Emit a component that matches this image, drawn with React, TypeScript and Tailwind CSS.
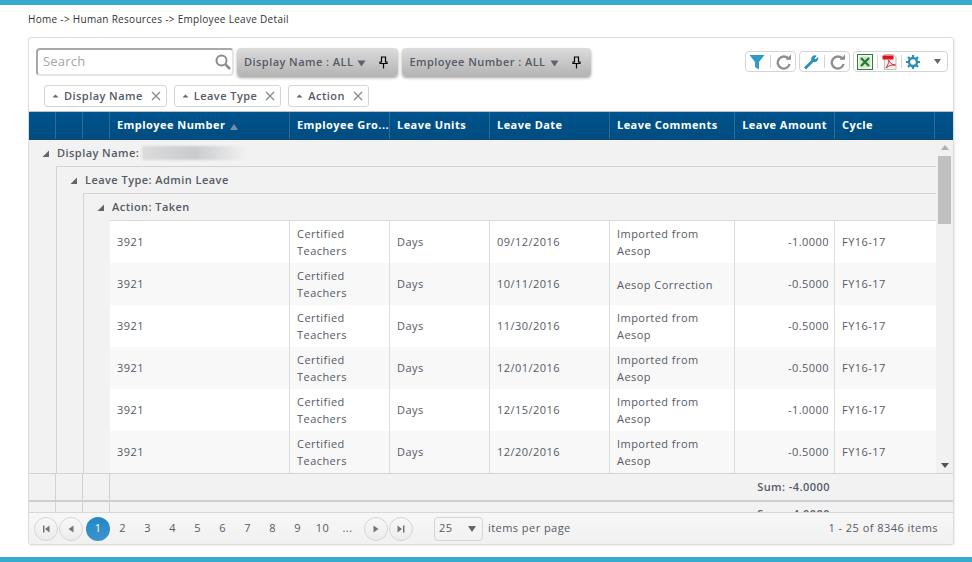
import { ChevronLeft } from "lucide-react"

const columns = [
  { label: "Employee Number", width: "w-[180px]", sort: true },
  { label: "Employee Gro...", width: "w-[100px]" },
  { label: "Leave Units", width: "w-[100px]" },
  { label: "Leave Date", width: "w-[120px]" },
  { label: "Leave Comments", width: "w-[125px]" },
  { label: "Leave Amount", width: "w-[100px]", right: true },
  { label: "Cycle", width: "w-[100px]" },
]

const rows = [
  { date: "09/12/2016", comment: "Imported from Aesop", amount: "-1.0000" },
  { date: "10/11/2016", comment: "Aesop Correction", amount: "-0.5000" },
  { date: "11/30/2016", comment: "Imported from Aesop", amount: "-0.5000" },
  { date: "12/01/2016", comment: "Imported from Aesop", amount: "-0.5000" },
  { date: "12/15/2016", comment: "Imported from Aesop", amount: "-1.0000" },
  { date: "12/20/2016", comment: "Imported from Aesop", amount: "-0.5000" },
]

function Corner() {
  return (
    <svg width="7" height="7" viewBox="0 0 7 7" className="shrink-0">
      <path d="M7 0.5V7H0.5z" fill="#5f6670" />
    </svg>
  )
}

function Refresh() {
  return (
    <svg width="16" height="16" viewBox="0 0 16 16" fill="none">
      <path d="M12.6 5A6 6 0 1 0 13.6 10" stroke="#8f8f8f" strokeWidth="2.4" />
      <path d="M9.5 5.8H15V0.6z" fill="#8f8f8f" />
    </svg>
  )
}

function Tag({ label }: { label: string }) {
  return (
    <div className="flex h-[22px] items-center rounded-[3px] border border-[#d5d5d5] bg-white pl-[7px] pr-[4px] text-[#555a66]">
      <svg width="7" height="4" viewBox="0 0 7 4"><path d="M3.5 0.5L6.5 3.5H0.5z" fill="#666" /></svg>
      <span className="ml-[5px] font-semibold">{label}</span>
      <svg width="12" height="12" viewBox="0 0 12 12" className="ml-[7px]">
        <path d="M2 2l8 8M10 2l-8 8" stroke="#8c8c8c" strokeWidth="1.4" />
      </svg>
    </div>
  )
}

function FilterButton({ label }: { label: string }) {
  return (
    <div className="flex h-[28px] items-center rounded-[4px] bg-gradient-to-b from-[#dcdcdc] to-[#b4b4b4] pl-[7px] pr-[10px] font-semibold text-[#555a66] shadow-[0_2px_3px_rgba(0,0,0,0.35)]">
      <span>{label}</span>
      <svg width="9" height="7" viewBox="0 0 9 7" className="ml-[4px] mt-[2px]"><path d="M0.5 0.5h8L4.5 6.5z" fill="#5a6270" /></svg>
      <svg width="9" height="13" viewBox="0 0 9 13" className="ml-[13px]">
        <path d="M2.5 1h4v5h1.5v1.5H1V6h1.5z" fill="none" stroke="#000" strokeWidth="1.2" />
        <path d="M4.5 7.5V12.5" stroke="#000" strokeWidth="1.2" />
      </svg>
    </div>
  )
}

function Group({ label, blurred, top }: { label: string; blurred?: boolean; top?: boolean }) {
  return (
    <div className={`flex h-[27px] items-center font-semibold text-[#555a66] ${top ? "" : "border-t border-[#d2d2d2]"}`}>
      <div className="ml-[12px] mr-[8px] flex w-[8px] justify-center"><Corner /></div>
      <span>{label}</span>
      {blurred && <div className="ml-[3px] h-[14px] w-[105px] bg-gradient-to-r from-[#dcdcdc] via-[#c9cbce] to-[#f2f2f2] blur-[1px]" />}
    </div>
  )
}

function SpacerCells({ count }: { count: number }) {
  return (
    <>
      {Array.from({ length: count }).map((_, i) => (
        <div key={i} className="w-[27px] shrink-0 border-r border-[#d2d2d2]" />
      ))}
    </>
  )
}

function RoundBtn({ d }: { d: string }) {
  return (
    <div className="flex h-[24px] w-[24px] items-center justify-center rounded-full border border-[#d5d5d5] bg-gradient-to-b from-[#f8f8f8] to-[#ececec]">
      <svg width="10" height="10" viewBox="0 0 10 10"><path d={d} fill="#6e7480" /></svg>
    </div>
  )
}

export default function App() {
  return (
    <div className="flex h-[562px] w-[972px] flex-col overflow-hidden border-y-[5px] border-[#36abce] bg-white font-['Open_Sans',sans-serif] text-[11px] tracking-[0.45px] text-[#555a66]">
      <div className="flex h-[27px] items-center pl-[28px] pt-[1px] text-[10px] tracking-[0.3px] text-[#333]">Home -&gt; Human Resources -&gt; Employee Leave Detail</div>

      <div className="ml-[28px] mt-[5px] flex h-[508px] w-[926px] flex-col overflow-hidden rounded-[3px] border border-[#dcdcdc] shadow-[1px_1px_2px_rgba(0,0,0,0.08)]">
        <div className="flex h-[73px] flex-col">
          <div className="flex items-start pl-[7px] pr-[5px] pt-[10px]">
            <div className="flex h-[28px] w-[198px] items-center rounded-[4px] border-2 border-[#a8a8a8] border-b-[#e4e4e4] border-r-[#e4e4e4] pl-[5px] pr-[1px] text-[13px] tracking-[0.2px] text-[#a5a5a5]">
              <span className="flex-1">Search</span>
              <svg width="16" height="16" viewBox="0 0 16 16" fill="none">
                <circle cx="6.5" cy="6.5" r="5" stroke="#8c8c8c" strokeWidth="2" />
                <path d="M10.5 10.5L15 15" stroke="#8c8c8c" strokeWidth="2.5" />
              </svg>
            </div>
            <div className="ml-[3px] flex gap-[4px]">
              <FilterButton label="Display Name : ALL" />
              <FilterButton label="Employee Number : ALL" />
            </div>
            <div className="ml-auto mt-[3px] flex items-center gap-[3px]">
              <div className="flex h-[21px] items-center gap-[5px] rounded-[4px] border border-[#d5d5d5] px-[3px]">
                <svg width="16" height="16" viewBox="0 0 16 16"><path d="M0.5 1h15L10 8v7.5L6 13V8z" fill="#2d9bc4" /></svg>
                <div className="h-[13px] w-px bg-[#d5d5d5]" />
                <Refresh />
              </div>
              <div className="flex h-[21px] items-center gap-[5px] rounded-[4px] border border-[#d5d5d5] px-[3px]">
                <svg width="16" height="16" viewBox="0 0 16 16" fill="none">
                  <path d="M2 14.5L10 6.5" stroke="#2d8fb8" strokeWidth="2.8" />
                  <path d="M9 7a3.6 3.6 0 0 1 4.8-5.2L11.5 4.2l1 1 2.6-2.2A3.8 3.8 0 0 1 10.6 8z" fill="#2d8fb8" />
                </svg>
                <div className="h-[13px] w-px bg-[#d5d5d5]" />
                <Refresh />
              </div>
              <div className="flex h-[21px] items-center gap-[3px] rounded-[4px] border border-[#d5d5d5] pl-[3px] pr-[3px]">
                <svg width="16" height="16" viewBox="0 0 16 16">
                  <rect x="0.5" y="0.5" width="15" height="15" fill="#f2f7ee" stroke="#2f7a3c" />
                  <rect x="2.5" y="2.5" width="11" height="11" fill="#cfe3c6" />
                  <path d="M4 4l8 8M12 4l-8 8" stroke="#1f7a37" strokeWidth="2.2" />
                </svg>
                <div className="mx-[1px] h-[13px] w-px bg-[#d5d5d5]" />
                <svg width="15" height="16" viewBox="0 0 15 16">
                  <path d="M2.5 0.5H11L14 3.5V15.5H2.5z" fill="#f3f3f3" stroke="#bdbdbd" />
                  <rect x="0.5" y="1.5" width="11" height="4" fill="#e0141e" />
                  <path d="M4 14C7 9 7 7 6.5 6C8 9 10 11 13.5 11C10 10.5 7 11.5 4 14z" fill="none" stroke="#d22" strokeWidth="1" />
                </svg>
                <div className="mx-[1px] h-[13px] w-px bg-[#d5d5d5]" />
                <svg width="14" height="14" viewBox="0 0 14 14" fill="none">
                  <circle cx="7" cy="7" r="4" stroke="#2d8fb8" strokeWidth="2.4" />
                  <path d="M7 0v3M7 11v3M0 7h3M11 7h3M2 2l2 2M10 10l2 2M12 2l-2 2M4 10l-2 2" stroke="#2d8fb8" strokeWidth="2.2" />
                </svg>
                <svg width="9" height="7" viewBox="0 0 9 7" className="ml-[10px] mr-[2px]"><path d="M1 1h7L4.5 6z" fill="#5f6670" /></svg>
              </div>
            </div>
          </div>
          <div className="ml-[15px] mt-[9px] flex gap-[7px]">
            <Tag label="Display Name" />
            <Tag label="Leave Type" />
            <Tag label="Action" />
          </div>
        </div>

        <div className="flex h-[29px] shrink-0 border-y border-[#b9c3cb] border-b-[#0d4a78] bg-gradient-to-b from-[#00538e] to-[#004d80] font-bold text-white">
          <SpacerColumns />
          {columns.map((c) => (
            <div key={c.label} className={`${c.width} flex shrink-0 items-center whitespace-nowrap border-r border-[#2b6c99] px-[7px] ${c.right ? "justify-end px-[4px]" : ""}`}>
              {c.label}
              {c.sort && <svg width="8" height="6" viewBox="0 0 8 6" className="ml-[5px] mt-[3px]"><path d="M4 0l4 6H0z" fill="#7d8da0" /></svg>}
            </div>
          ))}
        </div>

        <div className="flex min-h-0 flex-1 bg-[#f2f2f2]">
          <div className="flex min-w-0 flex-1 flex-col overflow-hidden">
            <Group label="Display Name:" blurred top />
            <div className="flex-1 pl-[27px]">
              <div className="border-l border-[#d2d2d2]">
                <Group label="Leave Type: Admin Leave" />
                <div className="pl-[26px]">
                  <div className="border-l border-[#d2d2d2]">
                    <Group label="Action: Taken" />
                    <div className="ml-[26px] border-t border-[#d8d8d8]">
                      {rows.map((r, i) => (
                        <div key={r.date} className={`flex h-[42px] ${i % 2 ? "bg-[#f8f8f8]" : "bg-white"}`}>
                          <div className="flex w-[180px] shrink-0 items-center border-r border-[#dcdcdc] px-[7px]">3921</div>
                          <div className="flex w-[100px] shrink-0 items-center border-r border-[#dcdcdc] px-[7px] leading-[17px]">Certified Teachers</div>
                          <div className="flex w-[100px] shrink-0 items-center border-r border-[#dcdcdc] px-[7px]">Days</div>
                          <div className="flex w-[120px] shrink-0 items-center border-r border-[#dcdcdc] px-[7px]">{r.date}</div>
                          <div className="flex w-[125px] shrink-0 items-center border-r border-[#dcdcdc] px-[7px] leading-[17px]">{r.comment}</div>
                          <div className="flex w-[100px] shrink-0 items-center justify-end border-r border-[#dcdcdc] px-[5px]">{r.amount}</div>
                          <div className="flex w-[100px] shrink-0 items-center px-[7px]">FY16-17</div>
                        </div>
                      ))}
                    </div>
                  </div>
                </div>
              </div>
            </div>
          </div>
          <div className="flex w-[17px] shrink-0 flex-col items-center justify-between bg-[#f1f1f1] py-[5px]">
            <div className="flex w-full flex-col items-center">
              <svg width="8" height="5" viewBox="0 0 8 5"><path d="M4 0l4 5H0z" fill="#b0b0b0" /></svg>
              <div className="mt-[6px] h-[68px] w-[13px] bg-[#c0c0c0]" />
            </div>
            <svg width="8" height="5" viewBox="0 0 8 5"><path d="M0 0h8L4 5z" fill="#555" /></svg>
          </div>
        </div>

        <div className="shrink-0 border-t border-[#d2d2d2] bg-[#f2f2f2]">
          <div className="flex h-[26px] pr-[17px]">
            <SpacerCells count={3} />
            <div className="flex flex-1 items-center justify-end pr-[106px] font-semibold">Sum: -4.0000</div>
          </div>
          <div className="flex h-[12px] overflow-hidden border-t-2 border-[#cfcfd3] pr-[17px]">
            <SpacerCells count={3} />
            <div className="flex flex-1 items-start justify-end pr-[106px] pt-[4px] font-semibold">Sum: -4.0000</div>
          </div>
        </div>

        <div className="flex h-[32px] shrink-0 items-center rounded-b-[3px] border-t border-[#d8d8d8] bg-gradient-to-b from-[#f7f7f7] to-[#f1f1f1] pl-[5px] pr-[15px]">
          <div className="flex items-center gap-[1px]">
            <RoundBtn d="M2 1.5h1.5v7H2zM8.5 1.5v7L4 5z" />
            <RoundBtn d="M7.5 1.5v7L2.5 5z" />
          </div>
          <div className="ml-[3px] flex items-center">
            <div className="flex h-[24px] w-[24px] items-center justify-center rounded-full bg-gradient-to-b from-[#2188c4] to-[#3d93cc] text-white">1</div>
            {["2", "3", "4", "5", "6", "7", "8", "9", "10", "..."].map((n) => (
              <div key={n} className="flex w-[25px] justify-center">{n}</div>
            ))}
          </div>
          <div className="ml-[4px] flex items-center gap-[1px]">
            <RoundBtn d="M2.5 1.5v7l5-3.5z" />
            <RoundBtn d="M1.5 1.5v7L6 5zM7 1.5h1.5v7H7z" />
          </div>
          <div className="ml-[21px] flex h-[24px] w-[49px] items-center justify-between rounded-[4px] border border-[#d5d5d5] pl-[4px] pr-[6px]">
            25
            <svg width="8" height="6" viewBox="0 0 8 6"><path d="M0 0h8L4 6z" fill="#5f6670" /></svg>
          </div>
          <span className="ml-[5px]">items per page</span>
          <span className="ml-auto">1 - 25 of 8346 items</span>
        </div>
      </div>
    </div>
  )
}

function SpacerColumns() {
  return (
    <>
      {[0, 1, 2].map((i) => (
        <div key={i} className="w-[27px] shrink-0 border-r border-[#2b6c99]" />
      ))}
    </>
  )
}
